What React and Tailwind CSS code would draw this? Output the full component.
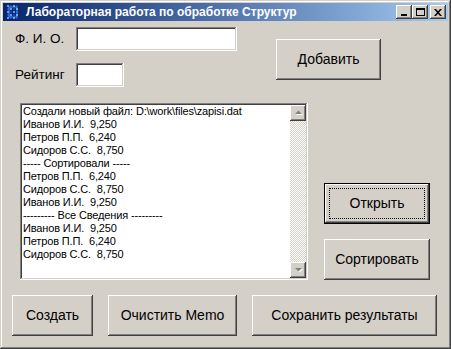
import React from 'react';

const raised = 'shadow-[inset_-1px_-1px_#404040,inset_1px_1px_#ffffff,inset_-2px_-2px_#808080,inset_2px_2px_#d4d0c8]';
const sunken = 'shadow-[inset_-1px_-1px_#ffffff,inset_1px_1px_#808080,inset_-2px_-2px_#d4d0c8,inset_2px_2px_#404040]';

const lines = [
  'Создали новый файл: D:\\work\\files\\zapisi.dat',
  'Иванов И.И.  9,250',
  'Петров П.П.  6,240',
  'Сидоров С.С.  8,750',
  '----- Сортировали -----',
  'Петров П.П.  6,240',
  'Сидоров С.С.  8,750',
  'Иванов И.И.  9,250',
  '--------- Все Сведения ---------',
  'Иванов И.И.  9,250',
  'Петров П.П.  6,240',
  'Сидоров С.С.  8,750',
];

const Button = ({ children, className = '', isDefault = false }) => (
  <button
    className={`relative flex items-center justify-center bg-[#d4d0c8] text-[14px] text-black ${raised} ${isDefault ? 'border border-black' : ''} ${className}`}
  >
    {isDefault && <span className="absolute inset-[4px] border border-dotted border-black" />}
    {children}
  </button>
);

const TitleIcon = () => (
  <svg width="16" height="16" viewBox="0 0 16 16" className="shrink-0">
    {[1, 4, 7, 10, 13].map(y =>
      [2, 5, 8, 11].map(x => (
        <rect key={`${x}-${y}`} x={x} y={y} width="2" height="2" fill={(x + y) % 2 ? '#4aa0ff' : '#1a3cd0'} />
      ))
    )}
    <rect x="4" y="3" width="8" height="10" fill="none" stroke="#7fd4ff" strokeWidth="0.6" />
  </svg>
);

const CaptionButton = ({ children, className = '' }) => (
  <div className={`w-[16px] h-[14px] bg-[#d4d0c8] flex items-center justify-center ${raised} ${className}`}>
    {children}
  </div>
);

const ScrollArrow = ({ up }) => (
  <div className={`w-[16px] h-[16px] bg-[#d4d0c8] flex items-center justify-center ${raised}`}>
    <svg width="9" height="6" viewBox="0 0 9 6">
      {up ? (
        <>
          <path d="M2 5h7L5.5 1.5z" fill="#ffffff" />
          <path d="M1 4h7L4.5 0.5z" fill="#808080" />
        </>
      ) : (
        <>
          <path d="M2 2h7L5.5 5.5z" fill="#ffffff" />
          <path d="M1 1h7L4.5 4.5z" fill="#808080" />
        </>
      )}
    </svg>
  </div>
);

export default function App() {
  return (
    <div
      className="w-[451px] h-[349px] bg-[#d4d0c8] p-[3px] flex flex-col shadow-[inset_-1px_-1px_#404040,inset_1px_1px_#d4d0c8,inset_-2px_-2px_#808080,inset_2px_2px_#ffffff]"
      style={{ fontFamily: '"Liberation Sans", Arial, sans-serif' }}
    >
      {/* Title bar */}
      <div className="h-[18px] flex items-center pl-[2px] pr-[2px] bg-gradient-to-r from-[#0a246a] to-[#a6caf0]">
        <TitleIcon />
        <span className="ml-[5px] text-white font-bold text-[12px] leading-none whitespace-nowrap">
          Лабораторная работа по обработке Структур
        </span>
        <div className="ml-auto flex items-center">
          <CaptionButton>
            <div className="w-[6px] h-[2px] bg-black mt-[6px] -ml-[1px]" />
          </CaptionButton>
          <CaptionButton>
            <div className="w-[9px] h-[8px] border border-black border-t-2" />
          </CaptionButton>
          <CaptionButton className="ml-[2px]">
            <svg width="8" height="7" viewBox="0 0 8 7">
              <path d="M0 0h2l2 2.2L6 0h2L5 3.5 8 7H6L4 4.8 2 7H0l3-3.5z" fill="#000" />
            </svg>
          </CaptionButton>
        </div>
      </div>

      {/* Client area */}
      <div className="flex-1 flex flex-col pl-[9px] text-black">
        <div className="flex mt-[6px]">
          <div className="flex flex-col pl-[3px]">
            <div className="flex items-center">
              <span className="w-[61px] text-[13.5px]">Ф. И. О.</span>
              <div className={`w-[161px] h-[24px] bg-white ${sunken}`} />
            </div>
            <div className="flex items-center mt-[12px]">
              <span className="w-[61px] text-[13.5px]">Рейтинг</span>
              <div className={`w-[48px] h-[24px] bg-white ${sunken}`} />
            </div>
          </div>
          <Button className="ml-[39px] mt-[12px] w-[105px] h-[41px]">Добавить</Button>
        </div>

        <div className="flex mt-[16px]">
          <div className={`ml-[8px] w-[288px] h-[177px] bg-white p-[2px] flex ${sunken}`}>
            <div className="flex-1 pl-[1px] text-[11px] leading-[13px] tracking-[-0.15px] whitespace-pre">
              {lines.map((l, i) => (
                <div key={i}>{l}</div>
              ))}
            </div>
            <div className="w-[16px] flex flex-col bg-[repeating-conic-gradient(#ffffff_0_25%,#d4d0c8_0_50%)] bg-[length:2px_2px]">
              <ScrollArrow up />
              <div className="flex-1" />
              <ScrollArrow />
            </div>
          </div>
          <div className="flex flex-col ml-[16px]">
            <Button isDefault className="mt-[80px] w-[106px] h-[41px]">Открыть</Button>
            <Button className="mt-[15px] w-[106px] h-[41px]">Сортировать</Button>
          </div>
        </div>

        <div className="flex mt-[15px] gap-[15px]">
          <Button className="w-[81px] h-[41px]">Создать</Button>
          <Button className="w-[129px] h-[41px]">Очистить Memo</Button>
          <Button className="w-[185px] h-[41px]">Сохранить результаты</Button>
        </div>
      </div>
    </div>
  );
}
